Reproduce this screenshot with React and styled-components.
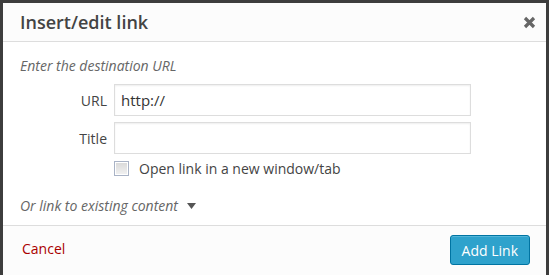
import React, { useState } from 'react'
import styled, { createGlobalStyle } from 'styled-components'

const GlobalStyle = createGlobalStyle`
  html, body {
    margin: 0;
    padding: 0;
    background: #3d3d3d;
    overflow: hidden;
  }
  body {
    font-family: "Open Sans", "Liberation Sans", sans-serif;
    color: #444;
  }
`

const Dialog = styled.div`
  margin: 3px 0 0 3px;
  width: 543px;
  height: 300px;
  background: #fff;
  display: flex;
  flex-direction: column;
`

const Header = styled.div`
  height: 38px;
  background: #fcfcfc;
  border-bottom: 1px solid #ddd;
  display: flex;
  align-items: center;
  justify-content: space-between;
  padding: 0 5px 0 17px;
`

const Title = styled.h1`
  margin: 0;
  font-size: 18px;
  font-weight: 600;
  color: #444;
  line-height: 1;
`

const CloseButton = styled.button`
  background: none;
  border: none;
  padding: 0;
  width: 24px;
  height: 24px;
  display: flex;
  align-items: center;
  justify-content: center;
  cursor: pointer;
`

const Body = styled.div`
  padding: 14px 17px 0;
  height: 169px;
  font-size: 14px;
`

const Hint = styled.p`
  margin: 0 0 8px;
  font-style: italic;
  color: #666;
  font-size: 14px;
  line-height: 20px;
`

const FieldRow = styled.div`
  display: flex;
  align-items: center;
  margin-bottom: 6px;
`

const Label = styled.label`
  width: 87px;
  text-align: right;
  padding-right: 7px;
  font-size: 14px;
  color: #444;
`

const TextInput = styled.input`
  box-sizing: border-box;
  width: 357px;
  height: 32px;
  border: 1px solid #ddd;
  box-shadow: inset 0 1px 2px rgba(0, 0, 0, 0.07);
  padding: 3px 6px;
  font-family: "Open Sans", "Liberation Sans", sans-serif;
  font-size: 15px;
  color: #333;
  outline: none;
`

const CheckRow = styled.label`
  display: flex;
  align-items: center;
  margin-left: 94px;
  margin-top: -1px;
  font-size: 14px;
  color: #444;
  gap: 10px;
`

const Box = styled.span`
  box-sizing: border-box;
  width: 15px;
  height: 15px;
  border: 1px solid #a9b3c6;
  background: linear-gradient(#d8d8d8, #f2f2f2);
  box-shadow: inset 0 0 0 1px #fff;
  display: inline-block;
`

const Toggle = styled.div`
  margin-top: 18px;
  font-style: italic;
  color: #666;
  font-size: 14px;
  display: flex;
  align-items: center;
  gap: 9px;
`

const Footer = styled.div`
  flex: 1;
  background: #fcfcfc;
  border-top: 1px solid #ddd;
  display: flex;
  align-items: flex-start;
  justify-content: space-between;
  padding: 9px 16px 0 19px;
`

const CancelLink = styled.a`
  color: #a00;
  font-size: 14px;
  margin-top: 4px;
  text-decoration: none;
`

const PrimaryButton = styled.button`
  box-sizing: border-box;
  height: 30px;
  padding: 0 11px;
  background: #2ea2cc;
  border: 1px solid #0074a2;
  border-radius: 3px;
  box-shadow: inset 0 1px 0 rgba(120, 200, 230, 0.5);
  color: #fff;
  font-family: "Open Sans", "Liberation Sans", sans-serif;
  font-size: 14px;
  cursor: pointer;
`

export default function App() {
  const [url, setUrl] = useState('http://')
  const [title, setTitle] = useState('')

  return (
    <>
      <GlobalStyle />
      <Dialog>
        <Header>
          <Title>Insert/edit link</Title>
          <CloseButton aria-label="Close">
            <svg width="13" height="13" viewBox="0 0 13 13">
              <path d="M2 2 L11 11 M11 2 L2 11" stroke="#666" strokeWidth="3.2" />
            </svg>
          </CloseButton>
        </Header>
        <Body>
          <Hint>Enter the destination URL</Hint>
          <FieldRow>
            <Label>URL</Label>
            <TextInput value={url} onChange={e => setUrl(e.target.value)} />
          </FieldRow>
          <FieldRow>
            <Label>Title</Label>
            <TextInput value={title} onChange={e => setTitle(e.target.value)} />
          </FieldRow>
          <CheckRow>
            <Box />
            <span>Open link in a new window/tab</span>
          </CheckRow>
          <Toggle>
            <span>Or link to existing content</span>
            <svg width="9" height="6" viewBox="0 0 9 6">
              <path d="M0 0 H9 L4.5 6 Z" fill="#555" />
            </svg>
          </Toggle>
        </Body>
        <Footer>
          <CancelLink href="#">Cancel</CancelLink>
          <PrimaryButton>Add Link</PrimaryButton>
        </Footer>
      </Dialog>
    </>
  )
}
